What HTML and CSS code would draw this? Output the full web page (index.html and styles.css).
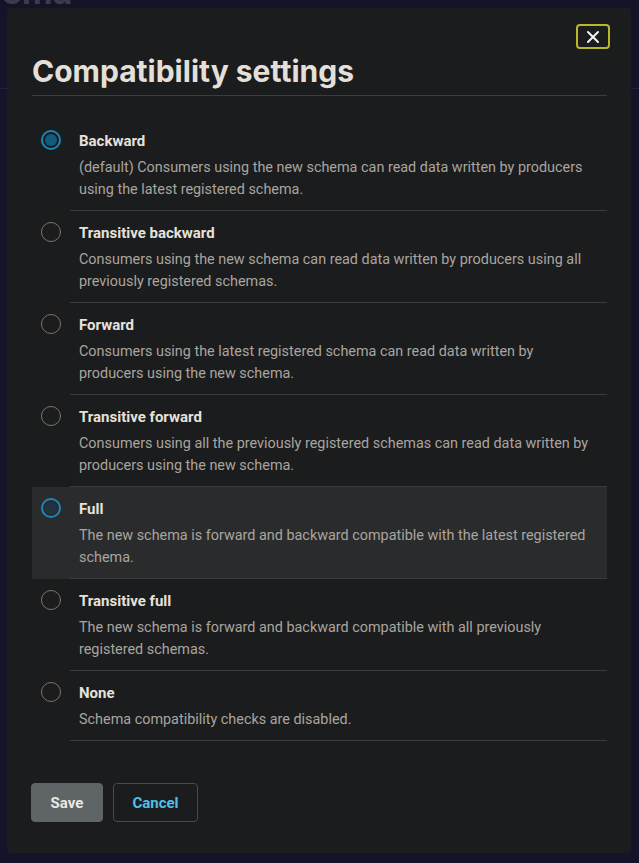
FILE: index.html
```html
<!DOCTYPE html>
<html lang="en">
<head>
<meta charset="utf-8">
<title>Compatibility settings</title>
<link rel="stylesheet" href="styles.css">
</head>
<body>
<div class="page">
  <h1 class="page-title">Schema</h1>
  <div class="page-rule"></div>
</div>
<div class="overlay">
  <div class="modal" role="dialog" aria-labelledby="dlg-title">
    <div class="modal-top">
      <button class="close" aria-label="Close">
        <svg width="14" height="14" viewBox="0 0 14 14"><path d="M2 2 L12 12 M12 2 L2 12" stroke="#f2f2f2" stroke-width="2" stroke-linecap="round"/></svg>
      </button>
    </div>
    <h2 class="title" id="dlg-title">Compatibility settings</h2>
    <div class="options">
      <label class="option">
        <span class="radio-col"><span class="radio checked"></span></span>
        <span class="content">
          <span class="label">Backward</span>
          <span class="desc">(default) Consumers using the new schema can read data written by producers using the latest registered schema.</span>
        </span>
      </label>
      <label class="option">
        <span class="radio-col"><span class="radio"></span></span>
        <span class="content">
          <span class="label">Transitive backward</span>
          <span class="desc">Consumers using the new schema can read data written by producers using all previously registered schemas.</span>
        </span>
      </label>
      <label class="option">
        <span class="radio-col"><span class="radio"></span></span>
        <span class="content">
          <span class="label">Forward</span>
          <span class="desc">Consumers using the latest registered schema can read data written by producers using the new schema.</span>
        </span>
      </label>
      <label class="option">
        <span class="radio-col"><span class="radio"></span></span>
        <span class="content">
          <span class="label">Transitive forward</span>
          <span class="desc">Consumers using all the previously registered schemas can read data written by producers using the new schema.</span>
        </span>
      </label>
      <label class="option hover">
        <span class="radio-col"><span class="radio focus"></span></span>
        <span class="content">
          <span class="label">Full</span>
          <span class="desc">The new schema is forward and backward compatible with the latest registered schema.</span>
        </span>
      </label>
      <label class="option">
        <span class="radio-col"><span class="radio"></span></span>
        <span class="content">
          <span class="label">Transitive full</span>
          <span class="desc">The new schema is forward and backward compatible with all previously registered schemas.</span>
        </span>
      </label>
      <label class="option">
        <span class="radio-col"><span class="radio"></span></span>
        <span class="content">
          <span class="label">None</span>
          <span class="desc">Schema compatibility checks are disabled.</span>
        </span>
      </label>
    </div>
    <div class="actions">
      <button class="btn btn-save">Save</button>
      <button class="btn btn-cancel">Cancel</button>
    </div>
  </div>
</div>
</body>
</html>
```

FILE: styles.css
```css
* { box-sizing: border-box; }
html, body {
  margin: 0;
  padding: 0;
  height: 100%;
  background: #13142a;
  font-family: Roboto, "Noto Sans", "Liberation Sans", sans-serif;
  overflow: hidden;
}
.page {
  position: relative;
  height: 100%;
}
.page-title {
  margin: -25px 0 0 -62px;
  font-family: Inter, Roboto, sans-serif;
  font-size: 34px;
  font-weight: 700;
  color: #3b3c4a;
  line-height: 34px;
}
.page-rule {
  margin-top: 79px;
  height: 1px;
  background: #1c2540;
}
.overlay {
  position: fixed;
  inset: 0;
  padding: 8px 8px 10px 7px;
}
.modal {
  height: 845px;
  background: #1b1c1e;
  border-radius: 4px;
  padding: 16px 24px 0 25px;
  display: flex;
  flex-direction: column;
}
.modal-top {
  display: flex;
  justify-content: flex-end;
  margin-right: -3px;
}
.close {
  width: 34px;
  height: 25px;
  border: 2px solid #b9b828;
  border-radius: 4px;
  background: transparent;
  display: flex;
  align-items: center;
  justify-content: center;
  padding: 0;
}
.title {
  margin: 3px 0 0;
  font-family: Inter, Roboto, sans-serif;
  font-size: 30px;
  line-height: 38px;
  font-weight: 700;
  color: #e4e0d9;
  padding-bottom: 5px;
  border-bottom: 1px solid #3b3c3e;
}
.options {
  margin-top: 23px;
  display: flex;
  flex-direction: column;
}
.option {
  display: flex;
  cursor: pointer;
}
.option.hover { background: #2a2b2d; }
.radio-col {
  width: 38px;
  flex: none;
  padding: 11px 0 0 9px;
}
.radio {
  display: block;
  width: 20px;
  height: 20px;
  border-radius: 50%;
  border: 1.5px solid #7b7569;
  position: relative;
}
.radio.checked { border: 2px solid #1b86b8; }
.radio.checked::after {
  content: "";
  position: absolute;
  inset: 2px;
  border-radius: 50%;
  background: #135b7e;
}
.radio.focus { border: 2px solid #1b86b8; }
.radio.focus::after {
  content: "";
  position: absolute;
  inset: 2px;
  border-radius: 50%;
  background: #213240;
}
.content {
  flex: 1;
  display: flex;
  flex-direction: column;
  padding: 11px 12px 9px 9px;
  border-bottom: 1px solid #3b3c3e;
}
.label {
  font-size: 15px;
  line-height: 22px;
  font-weight: 700;
  color: #e6e2db;
  margin-bottom: 5px;
}
.desc {
  font-size: 14.4px;
  line-height: 22px;
  color: #a9a59e;
}
.actions {
  margin-top: 42px;
  display: flex;
  gap: 10px;
}
.btn {
  height: 39px;
  border-radius: 4px;
  font-family: inherit;
  font-size: 15px;
  font-weight: 700;
  padding: 0;
}
.btn-save {
  width: 72px;
  background: #5f6467;
  border: 1px solid #5f6467;
  color: #ebe8e2;
  margin-left: -1px;
}
.btn-cancel {
  width: 85px;
  background: transparent;
  border: 1px solid #1c5c5e;
  color: #4fc1ea;
}
```
